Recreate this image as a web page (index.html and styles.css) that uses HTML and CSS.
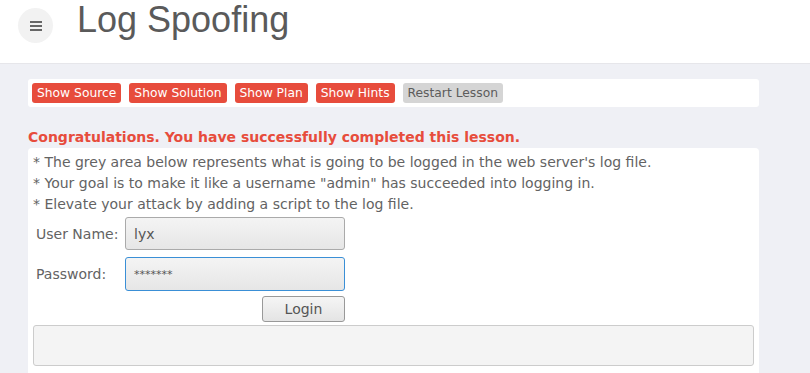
FILE: index.html
```html
<!DOCTYPE html>
<html lang="en">
<head>
    <meta charset="UTF-8">
    <meta name="viewport" content="width=device-width, initial-scale=1.0">
    <title>Log Spoofing</title>
    <link rel="stylesheet" href="styles.css">
</head>
<body>

    <!-- Top header -->
    <div class="header">
        <button class="menuToggle" aria-label="Menu">
            <svg width="12" height="10" viewBox="0 0 12 10">
                <rect x="0" y="0" width="12" height="2" fill="#666"/>
                <rect x="0" y="4" width="12" height="2" fill="#666"/>
                <rect x="0" y="8" width="12" height="2" fill="#666"/>
            </svg>
        </button>
        <h1>Log Spoofing</h1>
    </div>

    <div class="main">
        <!-- Lesson buttons -->
        <div class="lessonBar">
            <button class="lessonBtn">Show Source</button>
            <button class="lessonBtn">Show Solution</button>
            <button class="lessonBtn">Show Plan</button>
            <button class="lessonBtn">Show Hints</button>
            <button class="lessonBtn restart">Restart Lesson</button>
        </div>

        <div class="congrats">Congratulations. You have successfully completed this lesson.</div>

        <div class="lessonContent">
            <p>* The grey area below represents what is going to be logged in the web server's log file.</p>
            <p>* Your goal is to make it like a username "admin" has succeeded into logging in.</p>
            <p>* Elevate your attack by adding a script to the log file.</p>

            <form class="loginForm">
                <label for="username">User Name:</label>
                <input type="text" id="username" value="lyx">
                <label for="password">Password:</label>
                <input type="text" id="password" class="focused" value="*******">
                <span></span>
                <button type="button" class="loginBtn">Login</button>
            </form>

            <div class="logArea"></div>
        </div>
    </div>

</body>
</html>
```

FILE: styles.css
```css
body {
    margin: 0;
    font-family: "DejaVu Sans", sans-serif;
    background-color: #eff0f5;
    color: #555;
}
.header {
    background-color: #fff;
    height: 63px;
    border-bottom: 1px solid #e6e6ea;
    display: flex;
    align-items: flex-start;
}
.menuToggle {
    width: 35px;
    height: 35px;
    border-radius: 50%;
    border: none;
    background-color: #f2f2f2;
    margin: 8px 0 0 18px;
    padding: 0;
    display: flex;
    align-items: center;
    justify-content: center;
}
.header h1 {
    font-family: "Liberation Sans", Arial, sans-serif;
    font-weight: normal;
    font-size: 36px;
    color: #5a5a5a;
    margin: 0 0 0 24px;
    line-height: 40px;
}
.main {
    padding: 15px 0 0 28px;
    width: 731px;
}
.lessonBar {
    background-color: #fff;
    border-radius: 3px;
    padding: 4px;
    display: flex;
    gap: 8px;
}
.lessonBtn {
    font-family: "DejaVu Sans", sans-serif;
    font-size: 12.3px;
    height: 20px;
    line-height: 20px;
    padding: 0 5px;
    border: none;
    border-radius: 3px;
    background-color: #e74c3c;
    color: #fff;
}
.lessonBtn.restart {
    background-color: #d5d5d5;
    color: #5c5c5c;
}
.congrats {
    color: #e74c3c;
    font-weight: bold;
    font-size: 14px;
    line-height: 17px;
    margin: 22px 0 2px 0;
}
.lessonContent {
    background-color: #fff;
    border-radius: 4px;
    padding: 4px 5px 8px 5px;
    height: 220px;
}
.lessonContent p {
    margin: 0;
    font-size: 14px;
    line-height: 21px;
    color: #636363;
}
.loginForm {
    display: grid;
    grid-template-columns: 89px 220px;
    row-gap: 7px;
    align-items: center;
    margin: 2px 0 0 3px;
}
.loginForm label {
    font-size: 14px;
    color: #636363;
}
.loginForm input {
    height: 33px;
    box-sizing: border-box;
    border: 1px solid #aaa;
    border-radius: 3px;
    background: linear-gradient(#f4f4f4, #e6e6e6);
    font-family: "DejaVu Sans", sans-serif;
    font-size: 14px;
    color: #555;
    padding: 0 8px;
}
.loginForm input.focused {
    border-color: #3a8fd6;
    height: 34px;
    font-size: 11px;
}
.loginBtn {
    justify-self: end;
    width: 83px;
    height: 26px;
    border: 1px solid #999;
    border-radius: 3px;
    background: linear-gradient(#f5f5f5, #e4e4e4);
    font-family: "DejaVu Sans", sans-serif;
    font-size: 14px;
    color: #555;
    margin-top: -2px;
}
.logArea {
    margin-top: 3px;
    height: 39px;
    background-color: #f4f4f4;
    border: 1px solid #ccc;
    border-radius: 3px;
}
```
